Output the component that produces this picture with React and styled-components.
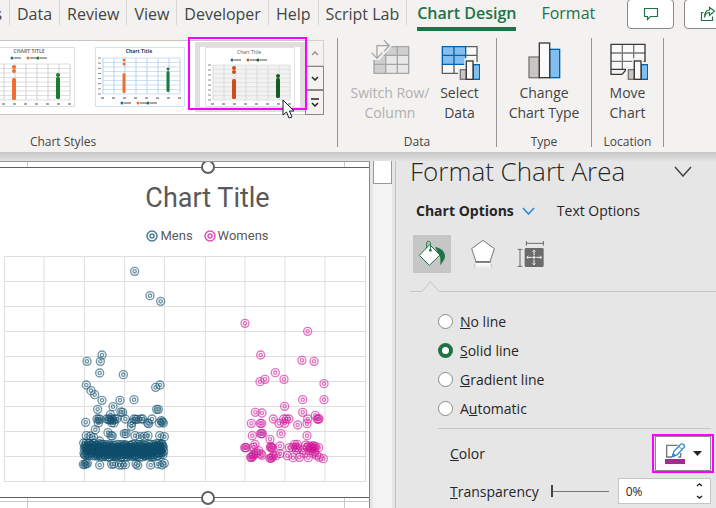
import React, { useState } from 'react'
import styled, { createGlobalStyle } from 'styled-components'

const GlobalStyle = createGlobalStyle`
  * {
    box-sizing: border-box;
  }

  body {
    margin: 0;
    background: #e6e6e6;
    color: #262626;
    font-family: "Open Sans", "Noto Sans", sans-serif;
    font-size: 14px;
    overflow: hidden;
  }

  button, input {
    font: inherit;
    color: inherit;
    margin: 0;
  }
`

const PlainButton = styled.button`
  border: 0;
  padding: 0;
  background: none;
  cursor: pointer;
`

const Window = styled.div`
  min-height: 100vh;
  display: flex;
  flex-direction: column;
  overflow: hidden;
`

/* Ribbon */

const Ribbon = styled.header`
  background: #f3f2f1;
  color: #444;
  padding-bottom: 5px;
`

const TabRow = styled.nav`
  display: flex;
  align-items: flex-start;
  height: 38px;
`

const Tab = styled(PlainButton)`
  flex: none;
  height: 25px;
  padding: 0 7px;
  border-right: 1px solid #dad8d6;
  font-size: 16px;
  line-height: 28px;
`

const CutTab = styled(Tab)`
  width: 10px;
  padding-left: 0;
  display: flex;
  justify-content: flex-end;
`

const ContextTab = styled(PlainButton)`
  flex: none;
  margin-left: ${props => (props.$active ? 10 : 25)}px;
  height: 31px;
  font-size: 16px;
  line-height: 27px;
  color: #217346;
  font-weight: ${props => (props.$active ? 600 : 400)};
  border-bottom: 4px solid ${props => (props.$active ? '#217346' : 'transparent')};
`

const TabActions = styled.div`
  display: flex;
  gap: 10px;
  margin-left: auto;
  margin-right: -15px;
`

const ActionButton = styled(PlainButton)`
  width: 47px;
  height: 30px;
  margin-top: -1px;
  border: 1px solid #8a8886;
  border-radius: 4px;
  background: #fff;
  display: flex;
  align-items: center;
  justify-content: center;
`

const RibbonBody = styled.div`
  display: flex;
`

const Group = styled.section`
  flex: none;
  width: ${props => props.$width}px;
  height: 109px;
  padding-top: 2px;
  border-right: 1px solid #979593;
  display: flex;
  flex-direction: column;
  justify-content: space-between;
`

const GroupLabel = styled.div`
  font-size: 12px;
  line-height: 10px;
  text-align: center;
  padding-right: ${props => props.$shift || 0}px;
`

const Commands = styled.div`
  display: flex;
  justify-content: center;
`

const Command = styled(PlainButton)`
  display: flex;
  flex-direction: column;
  align-items: center;
  padding: 0 3px;
  min-width: 54px;
  line-height: 20px;
  white-space: nowrap;

  svg {
    margin-bottom: 3px;
  }

  &:disabled {
    color: #b1afad;
  }
`

const Gallery = styled.div`
  position: relative;
  display: flex;
  width: 324px;
  height: 75px;
`

const GalleryStrip = styled.div`
  flex: 1;
  min-width: 0;
  display: flex;
  justify-content: flex-end;
  overflow: hidden;
  background: #fff;
  border-top: 1px solid #c8c6c4;
  border-bottom: 1px solid #c8c6c4;
`

const StyleItem = styled(PlainButton)`
  flex: none;
  width: 110px;
  height: 70px;
  margin-top: 1px;
  padding: 0 5px;
  border: 5px solid ${props => (props.$selected ? '#e1dfdd' : 'transparent')};

  svg {
    display: block;
  }
`

const GalleryButtons = styled.div`
  width: 19px;
  display: grid;
  grid-template-rows: 26px 24px 25px;
`

const GalleryButton = styled(PlainButton)`
  display: flex;
  align-items: center;
  justify-content: center;
  border: 1px solid #8a8886;

  &:disabled {
    border-color: #d2d0ce;
  }
`

const GalleryHighlight = styled.div`
  position: absolute;
  left: 188px;
  top: -3px;
  width: 119px;
  height: 73px;
  border: 2px solid #ff00ff;
`

const Pointer = styled.svg`
  position: absolute;
  left: 282px;
  top: 59px;
`

const Shade = styled.div`
  height: 9px;
  background: linear-gradient(#c6c6c6, #e2e2e2);
`

/* Sheet */

const Workspace = styled.main`
  flex: 1;
  display: flex;
`

const Sheet = styled.div`
  flex: 1;
  min-width: 0;
  overflow: hidden;
  background: #fff;
  border-top: 1px solid #999;
  border-right: 1px solid #888;
`

const CellRow = styled.div`
  display: flex;
  height: ${props => props.$height}px;
  border-top: ${props => (props.$line ? '1px solid #c8c8c8' : '0')};
`

const Cell = styled.div`
  flex: none;
  width: ${props => props.$width}px;
  border-right: 1px solid #c8c8c8;
`

// the chart is wider than the visible cells and runs under the scroll bar
const ChartFrame = styled.div`
  position: relative;
  margin-right: -46px;
  padding: 11px 0 7px;
  border-top: 1px solid #606060;
  border-bottom: 1px solid #606060;
  font-family: Roboto, sans-serif;
  color: #595959;
`

const Handle = styled.span`
  position: absolute;
  left: 50%;
  ${props => props.$edge}: -8px;
  width: 14px;
  height: 14px;
  margin-left: -7px;
  border: 2px solid #606060;
  border-radius: 50%;
  background: #fff;
`

const ChartTitle = styled.h1`
  margin: 0;
  font-size: 27px;
  font-weight: 400;
  line-height: 38px;
  text-align: center;
`

const Legend = styled.div`
  display: flex;
  justify-content: center;
  gap: 11px;
  margin: 9px 0 4px;
  font-size: 13px;
  line-height: 20px;
`

const LegendItem = styled.span`
  display: flex;
  align-items: center;
  gap: 2px;
`

const Plot = styled.svg`
  display: block;
  width: 100%;
`

const ScrollTrack = styled.div`
  flex: none;
  width: 19px;
  margin: 0 3px;
  background: #f3f3f3;
`

const ScrollThumb = styled.div`
  height: 23px;
  background: #fff;
  border: 1px solid #999;
  border-top: 0;
`

/* Format pane */

const Pane = styled.aside`
  flex: none;
  width: 321px;
  border-left: 1px solid #bfbfbf;
`

const PaneHead = styled.div`
  display: flex;
  align-items: center;
  justify-content: space-between;
  height: 20px;
  padding: 0 24px 0 14px;
`

const PaneTitle = styled.h2`
  margin: 0;
  font-size: 26px;
  font-weight: 300;
  line-height: 20px;
`

const OptionTabs = styled.div`
  display: flex;
  align-items: center;
  gap: 22px;
  margin-top: 20px;
  padding-left: 20px;
  line-height: 20px;
`

const OptionTab = styled(PlainButton)`
  display: flex;
  align-items: center;
  gap: 8px;
  font-weight: ${props => (props.$active ? 700 : 400)};
`

const IconTabs = styled.div`
  display: flex;
  gap: 13px;
  margin-top: 14px;
  padding-left: 17px;
`

const IconTab = styled(PlainButton)`
  width: 38px;
  height: 38px;
  background: ${props => (props.$active ? '#c6c6c6' : 'none')};

  svg {
    display: block;
  }
`

const Notch = styled.div`
  display: flex;
  align-items: flex-end;
  height: 12px;
  margin: 7px 0 0 14px;

  &::before, &::after {
    content: '';
    height: 1px;
    background: #c6c6c6;
  }

  &::before {
    width: 12px;
  }

  &::after {
    flex: 1;
  }
`

const LineOptions = styled.div`
  margin: 15px 5px 0 42px;
  padding-bottom: 5px;
  border-bottom: 1px solid #c6c6c6;
`

const RadioRow = styled.label`
  display: flex;
  align-items: center;
  gap: 7px;
  height: 29px;
`

const Radio = styled.input`
  appearance: none;
  width: 15px;
  height: 15px;
  border: 1px solid #8a8a8a;
  border-radius: 50%;
  background: #fff;

  &:checked {
    border: 4px solid #217346;
  }
`

const Field = styled.div`
  display: flex;
  align-items: center;
  justify-content: space-between;
  padding: 0 5px 0 54px;
  margin-top: 7px;
`

const ColorButton = styled(PlainButton)`
  position: relative;
  width: 56px;
  height: 35px;
  display: flex;
  align-items: center;
  justify-content: center;
  gap: 8px;
  border: 1px solid #8a8a8a;
  background: #fff;

  &::after {
    content: '';
    position: absolute;
    inset: -3px -4px;
    border: 2px solid #ff00ff;
  }
`

const Slider = styled.input`
  appearance: none;
  width: 58px;
  height: 14px;
  margin: 0 9px 0 12px;
  background: linear-gradient(#767676, #767676) center / 100% 1px no-repeat;

  &::-webkit-slider-thumb {
    appearance: none;
    width: 2px;
    height: 12px;
    background: #444;
  }
`

const SpinBox = styled.div`
  display: flex;
  flex: 1;
  min-width: 0;
  height: 26px;
  border: 1px solid #c6c6c6;
  background: #fff;
`

const SpinInput = styled.input`
  flex: 1;
  min-width: 0;
  border: 0;
  padding: 0 7px;
  background: none;
  font-size: 12px;
`

const SpinButtons = styled.div`
  display: grid;
  flex: none;
  width: 22px;
`

const SpinButton = styled(PlainButton)`
  display: flex;
  align-items: center;
  justify-content: center;
`

const Chevron = ({ width = 8, height = 5, color = '#262626', weight = 1.5, up, bar }) => (
  <svg width={width} height={height + (bar ? 4 : 0)} fill="none" stroke={color} strokeWidth={weight}>
    {bar && <path d={`M0 1H${width}`} />}
    <path
      d={up
        ? `M1 ${height - 1}L${width / 2} 1L${width - 1} ${height - 1}`
        : `M1 ${bar ? 5 : 1}L${width / 2} ${height + (bar ? 3 : -1)}L${width - 1} ${bar ? 5 : 1}`}
    />
  </svg>
)

const thumbColumns = [8, 19, 30, 41, 52, 63, 74, 85]

const StyleThumb = ({ title, titleY, titleColor, bold, legendY, plotY, plotH, grid, border, fill, orange, green, wide, tops }) => {
  const w = wide ? 4 : 3
  return (
    <svg width="90" height="60" viewBox="0 0 90 60">
      <rect x=".5" y=".5" width="89" height="59" fill="#fff" stroke={border} />
      <rect x="8" y={plotY} width="77" height={plotH} fill={fill} />
      <g stroke={grid} strokeWidth="1">
        {thumbColumns.map(x => <path key={x} d={`M${x} ${plotY}v${plotH}`} />)}
        {[0, 1, 2, 3, 4, 5, 6, 7, 8].map(i => (
          <path key={i} strokeWidth=".7" d={`M8 ${plotY + (plotH * i) / 8}h77`} />
        ))}
      </g>
      <g stroke="#888" strokeWidth="1.5">
        {thumbColumns.map(x => <path key={x} d={`M${x - 2} ${plotY + plotH + 4}h3`} />)}
        {[0, 1, 2, 3, 4, 5, 6, 7].map(i => (
          <path key={i} strokeWidth="1" d={`M3 ${plotY + (plotH * i) / 7}h3`} />
        ))}
      </g>
      <text x="44" y={titleY} textAnchor="middle" fontSize="5" fontWeight={bold ? 700 : 400} fill={titleColor}>{title}</text>
      {[[27, '#1f6b94'], [43, orange], [53, green]].map(([x, color]) => (
        <g key={x}>
          <circle cx={x} cy={legendY} r="1.5" fill={color} />
          <path d={`M${x + 2} ${legendY}h7`} stroke="#888" strokeWidth="1.5" />
        </g>
      ))}
      <g fill={orange}>
        <circle cx="29" cy={tops[0]} r={w / 2} />
        <circle cx="29" cy={tops[0] + 4} r={w / 2} />
        <rect x={29 - w / 2} y={tops[1]} width={w} height={tops[3] - tops[1]} rx="1.5" />
      </g>
      <g fill={green}>
        <circle cx="73" cy={tops[2]} r={w / 2} />
        <rect x={73 - w / 2} y={tops[2] + 2} width={w} height={tops[3] - tops[2] - 3} rx="1.5" />
      </g>
    </svg>
  )
}

const chartStyles = [
  { title: 'CHART TITLE', titleY: 6, titleColor: '#777', bold: true, legendY: 11, plotY: 17, plotH: 36, grid: '#d0d0d0', border: '#dcdcdc', fill: '#fff', orange: '#ed7031', green: '#1b7a2f', wide: true, tops: [20, 31, 28, 53] },
  { title: 'Chart Title', titleY: 6, titleColor: '#1d3c63', bold: true, legendY: 56, plotY: 11, plotH: 36, grid: '#b5d3ef', border: '#cfe4f7', fill: '#fff', orange: '#ed7031', green: '#1b7a3c', tops: [13, 26, 22, 46] },
  { title: 'Chart Title', titleY: 7, titleColor: '#555', legendY: 13, plotY: 18, plotH: 35, grid: '#dadada', border: '#e3e3e3', fill: '#f2f2f2', orange: '#c9501a', green: '#155c24', wide: true, tops: [21, 32, 29, 52], selected: true },
]

const SmallBars = () => (
  <g strokeWidth="4">
    <path d="M54 122V80H73V55H106V66H126V122Z" fill="#f3f2f1" />
    <rect x="61" y="89" width="18" height="29" fill="#c8c6c4" stroke="#797775" />
    <rect x="100" y="74" width="19" height="44" fill="#83beec" stroke="#0063b1" />
    <rect x="79" y="63" width="20" height="55" fill="#fafafa" stroke="#3b3a39" />
  </g>
)

const SwitchIcon = () => (
  <svg width="40" height="40" viewBox="0 0 120 120" fill="none" strokeWidth="4">
    <path d="M12 20H116V100H12Z" fill="#e8e8e9" />
    <path d="M12 20H116V46H47V100H12Z" fill="#cfcfcf" />
    <path d="M12 20H116V100H12ZM47 20V100M82 20V100M12 46H116M12 73H116" stroke="#a5a5a5" />
    <path d="M0 0H66V18L28 60H0Z" fill="#f3f2f1" />
    <path d="M21 54V17H57M5 38L21 55L37 38M42 1L58 17L42 34" stroke="#a5a5a5" />
  </svg>
)

const SelectIcon = () => (
  <svg width="40" height="40" viewBox="0 0 120 120" fill="none" strokeWidth="4">
    <path d="M7 20H111V100H7Z" fill="#fafafa" />
    <path d="M77 20H111V100H7V73M42 73V100M77 46H111M77 73H111" stroke="#605e5c" />
    <path d="M7 20H77V73H7Z" fill="#83beec" />
    <path d="M7 20H77V73H7ZM42 20V73M7 46H77" stroke="#0063b1" />
    <SmallBars />
  </svg>
)

const ChartTypeIcon = () => (
  <svg width="40" height="40" viewBox="0 0 120 120" strokeWidth="4">
    <rect x="15" y="51" width="31" height="62" fill="#c8c6c4" stroke="#797775" />
    <rect x="77" y="28" width="30" height="85" fill="#83beec" stroke="#0063b1" />
    <rect x="46" y="9" width="31" height="104" fill="#fafafa" stroke="#3b3a39" />
  </svg>
)

const MoveIcon = () => (
  <svg width="40" height="40" viewBox="0 0 120 120" fill="none" strokeWidth="4">
    <path d="M9 13H111V88H9Z" fill="#fafafa" />
    <path d="M9 39H111M9 64H111M43 13V88M77 13V88" stroke="#797775" />
    <path d="M9 88V13H111V88M9 88H55L42 103H9V88" stroke="#3b3a39" />
    <SmallBars />
  </svg>
)

const CommentIcon = () => (
  <svg width="16" height="14" fill="none" stroke="#217346" strokeWidth="1.2">
    <path d="M1.5 1.5H14.5V9.5H7.5L4.5 12.5V9.5H1.5Z" />
  </svg>
)

const ShareIcon = () => (
  <svg width="16" height="16" fill="none" stroke="#217346" strokeWidth="1.2">
    <path d="M3.5 6.5H1.5V14.5H12.5V10.5" />
    <path d="M4.5 11.5C5 8 7 6.5 9.5 6.5V9.5L14.5 5L9.5 1.5V4C6 4 4.5 7 4.5 11.5Z" />
  </svg>
)

const FillIcon = () => (
  <svg width="38" height="38" viewBox="0 0 114 114" fill="none" strokeWidth="3">
    <path d="M66 36C86 40 96 50 96 64C96 74 88 82 82 91C82 78 84 68 78 60Z" fill="#217346" />
    <path d="M50 29L81 60L49 91L19 61Z" fill="#fff" stroke="#217346" />
    <path d="M41 40V24C41 17 52 17 52 24V44" stroke="#217346" />
    <circle cx="52" cy="46" r="4" fill="#217346" />
  </svg>
)

const PentagonIcon = () => (
  <svg width="38" height="38" viewBox="0 0 114 114">
    <defs>
      <linearGradient id="reflection" x1="0" y1="0" x2="0" y2="1">
        <stop offset="0" stopColor="#fff" />
        <stop offset="1" stopColor="#fff" stopOpacity=".2" />
      </linearGradient>
    </defs>
    <path d="M34 84H80L84 98H30Z" fill="url(#reflection)" />
    <path d="M34 86L30 98M80 86L84 98" stroke="#aaa" strokeWidth="2" />
    <path d="M57 16L91 41L78 80H36L23 41Z" fill="#fff" stroke="#767676" strokeWidth="3" />
    <path d="M34 81H80" stroke="#767676" strokeWidth="5" />
  </svg>
)

const SizeIcon = () => (
  <svg width="38" height="38" viewBox="0 0 114 114" fill="none" strokeWidth="3">
    <path d="M34 25H85M34 18V32M85 18V32M15 43V94M8 43H22M8 94H22" stroke="#6b6b6b" />
    <rect x="29" y="39" width="57" height="57" rx="4" fill="#6b6b6b" />
    <path d="M57 46V60M57 74V89M36 67H50M64 67H79M52 67H62M57 62V72" stroke="#fff" />
    <path d="M52 50L57 45L62 50M52 85L57 90L62 85M40 62L35 67L40 72M75 62L80 67L75 72" stroke="#fff" strokeWidth="2" />
  </svg>
)

const PenIcon = () => (
  <svg width="20" height="21" viewBox="0 0 60 63" fill="none">
    <path d="M22 42H5V7H38M47 30V42H40" stroke="#767676" strokeWidth="4" />
    <path d="M22 41L27 25L47 4C52 0 61 7 57 13L37 35Z" fill="#fff" stroke="#2b88d8" strokeWidth="4" />
    <path d="M22 41L25 31L31 38ZM41 10L51 19" fill="#2b88d8" stroke="#2b88d8" strokeWidth="3" />
    <rect y="48" width="60" height="15" fill="#9e2c91" />
  </svg>
)

/* Chart data, in plot units (three to a pixel) */

const mens = [
  [404, 64], [450, 137], [482, 154],
  [261, 334], [306, 315], [301, 334], [299, 369], [370, 374], [259, 405], [273, 422], [284, 434],
  [306, 451], [360, 451], [402, 449], [467, 412], [480, 405], [293, 478], [339, 470], [363, 486],
  [368, 487], [470, 478], [475, 478], [331, 494], [257, 517], [291, 507], [296, 507], [300, 508],
  [295, 519], [320, 507], [325, 508], [329, 510], [334, 506], [338, 509], [345, 507], [350, 507],
  [335, 518], [342, 519], [376, 507], [402, 507], [407, 508], [412, 508], [423, 507], [428, 507],
  [443, 519], [446, 521], [456, 507], [478, 519], [484, 512], [487, 516], [490, 519], [395, 519],
  [394, 529], [286, 539], [324, 548], [333, 557], [337, 558], [373, 551], [378, 551], [405, 557],
  [420, 560], [433, 559], [444, 557], [479, 557], [493, 560], [259, 557], [272, 558], [281, 563],
  [299, 573], [250, 643], [254, 644], [258, 641], [262, 640], [299, 645], [335, 643], [341, 642],
  [358, 645], [366, 645], [376, 644], [408, 642], [413, 646], [452, 645], [474, 642], [486, 645], [493, 640],
]

// the crowded band near the axis
const rows = [583, 590, 595, 600, 605, 612, 618]
for (let i = 0; i < 240; i++) {
  const x = 251 + ((i * 97) % 241)
  mens.push([x, rows[(i * 5 + (i % 3)) % 7] + (i % 4) - (x < 285 || x > 465 ? 4 : 0)])
}

const womens = [
  [735, 220], [923, 244],
  [782, 315], [906, 331], [942, 334], [826, 368], [852, 388], [795, 388], [780, 395], [972, 401],
  [908, 449], [972, 449], [854, 469], [766, 487], [786, 489], [908, 487], [946, 496], [820, 507],
  [851, 507], [859, 507], [867, 507], [923, 507], [952, 507], [955, 508], [957, 506], [754, 520],
  [781, 520], [785, 520], [837, 520], [854, 520], [893, 525], [921, 521], [757, 557], [782, 551],
  [785, 551], [787, 551], [843, 551], [921, 557], [810, 568], [765, 583], [840, 588], [734, 593],
  [737, 593], [739, 593], [760, 592], [812, 593], [815, 592], [817, 594], [812, 589], [868, 593],
  [884, 583], [892, 583], [878, 593], [887, 593], [893, 594], [917, 585], [922, 592], [927, 588],
  [932, 593], [936, 590], [940, 587], [944, 594], [938, 596], [946, 589], [956, 593], [776, 602],
  [768, 610], [761, 612], [786, 616], [752, 622], [754, 622], [757, 621], [760, 616], [783, 612],
  [810, 625], [813, 625], [815, 622], [820, 618], [828, 617], [840, 611], [862, 617], [879, 623],
  [898, 622], [912, 610], [925, 623], [940, 610], [944, 605], [950, 616], [958, 622], [970, 626],
  [890, 600], [909, 600], [930, 602],
]

const columns = [13, 132, 253, 374, 493, 616, 735, 855, 975, 1097]

const Markers = ({ points, color }) => (
  <g fill="none" stroke={color} strokeWidth="4" strokeOpacity=".6">
    {points.map(([x, y], i) => (
      <React.Fragment key={i}>
        <circle cx={x} cy={y} r="12" />
        <circle cx={x} cy={y} r="5" />
      </React.Fragment>
    ))}
  </g>
)

const LegendMarker = ({ color }) => (
  <svg width="12" height="12" fill="none" stroke={color} strokeWidth="1.5">
    <circle cx="6" cy="6" r="5" />
    <circle cx="6" cy="6" r="2" />
  </svg>
)

const lineTypes = [
  { id: 'none', label: <><u>N</u>o line</> },
  { id: 'solid', label: <><u>S</u>olid line</> },
  { id: 'gradient', label: <><u>G</u>radient line</> },
  { id: 'auto', label: <>A<u>u</u>tomatic</> },
]

const RibbonBar = () => (
  <Ribbon>
    <TabRow>
      <CutTab>s</CutTab>
      {['Data', 'Review', 'View', 'Developer', 'Help', 'Script Lab'].map(name => <Tab key={name}>{name}</Tab>)}
      <ContextTab $active>Chart Design</ContextTab>
      <ContextTab>Format</ContextTab>
      <TabActions>
        <ActionButton aria-label="Comments"><CommentIcon /></ActionButton>
        <ActionButton aria-label="Share"><ShareIcon /></ActionButton>
      </TabActions>
    </TabRow>
    <RibbonBody>
      <Group $width={338}>
        <Gallery>
          <GalleryStrip>
            {chartStyles.map((style, i) => (
              <StyleItem key={i} $selected={style.selected}><StyleThumb {...style} /></StyleItem>
            ))}
          </GalleryStrip>
          <GalleryButtons>
            <GalleryButton disabled aria-label="Previous"><Chevron up color="#979593" /></GalleryButton>
            <GalleryButton aria-label="Next"><Chevron /></GalleryButton>
            <GalleryButton aria-label="More"><Chevron bar /></GalleryButton>
          </GalleryButtons>
          <GalleryHighlight />
          <Pointer width="14" height="21" viewBox="0 0 14 21">
            <path d="M1 1V16L4.5 13L7 19L10 18L7.5 12H12Z" fill="#fff" stroke="#1b1b2b" />
          </Pointer>
        </Gallery>
        <GroupLabel $shift={211}>Chart Styles</GroupLabel>
      </Group>
      <Group $width={159}>
        <Commands>
          <Command disabled><SwitchIcon /><span>Switch Row/</span><span>Column</span></Command>
          <Command><SelectIcon /><span>Select</span><span>Data</span></Command>
        </Commands>
        <GroupLabel>Data</GroupLabel>
      </Group>
      <Group $width={95}>
        <Commands>
          <Command><ChartTypeIcon /><span>Change</span><span>Chart Type</span></Command>
        </Commands>
        <GroupLabel>Type</GroupLabel>
      </Group>
      <Group $width={72}>
        <Commands>
          <Command><MoveIcon /><span>Move</span><span>Chart</span></Command>
        </Commands>
        <GroupLabel>Location</GroupLabel>
      </Group>
    </RibbonBody>
  </Ribbon>
)

const ChartSheet = () => (
  <Sheet>
    <CellRow $height={5}><Cell $width={28} /><Cell $width={317} /></CellRow>
    <ChartFrame>
      <ChartTitle>Chart Title</ChartTitle>
      <Legend>
        <LegendItem><LegendMarker color="#4a7d96" />Mens</LegendItem>
        <LegendItem><LegendMarker color="#e04fb9" />Womens</LegendItem>
      </Legend>
      <Plot viewBox="0 0 1245 720">
        <g stroke="#dedede" strokeWidth="3">
          {columns.map(x => <path key={x} d={`M${x} 20V694`} />)}
          {[0, 1, 2, 3, 4, 5, 6, 7, 8, 9].map(i => <path key={i} d={`M12 ${19.5 + i * 75}H1098`} />)}
        </g>
        <Markers points={mens} color="#0f4f6b" />
        <Markers points={womens} color="#cf1598" />
      </Plot>
      <Handle $edge="top" />
      <Handle $edge="bottom" />
    </ChartFrame>
    <CellRow $height={3}><Cell $width={28} /><Cell $width={317} /></CellRow>
    <CellRow $height={7} $line><Cell $width={28} /><Cell $width={317} /></CellRow>
  </Sheet>
)

const FormatPane = () => {
  const [line, setLine] = useState('solid')
  const [transparency, setTransparency] = useState(0)
  const step = by => setTransparency(Math.min(100, Math.max(0, transparency + by)))

  return (
    <Pane>
      <PaneHead>
        <PaneTitle>Format Chart Area</PaneTitle>
        <PlainButton aria-label="Pane options"><Chevron width={18} height={11} color="#444" /></PlainButton>
      </PaneHead>
      <OptionTabs>
        <OptionTab $active>Chart Options <Chevron width={13} height={8} color="#2b88d8" /></OptionTab>
        <OptionTab>Text Options</OptionTab>
      </OptionTabs>
      <IconTabs>
        <IconTab $active aria-label="Fill and line"><FillIcon /></IconTab>
        <IconTab aria-label="Effects"><PentagonIcon /></IconTab>
        <IconTab aria-label="Size and properties"><SizeIcon /></IconTab>
      </IconTabs>
      <Notch>
        <svg width="17" height="12" fill="none" stroke="#c6c6c6"><path d="M0 11.5L8.5 1.5L17 11.5" /></svg>
      </Notch>
      <LineOptions>
        {lineTypes.map(({ id, label }) => (
          <RadioRow key={id}>
            <Radio type="radio" name="line" checked={line === id} onChange={() => setLine(id)} />
            <span>{label}</span>
          </RadioRow>
        ))}
      </LineOptions>
      <Field>
        <label htmlFor="color"><u>C</u>olor</label>
        <ColorButton id="color">
          <PenIcon />
          <svg width="9" height="5"><path d="M0 0H9L4.5 5Z" fill="#262626" /></svg>
        </ColorButton>
      </Field>
      <Field>
        <label htmlFor="transparency"><u>T</u>ransparency</label>
        <Slider
          id="transparency"
          type="range"
          min="0"
          max="100"
          value={transparency}
          onChange={e => setTransparency(Number(e.target.value))}
        />
        <SpinBox>
          <SpinInput aria-label="Transparency" readOnly value={`${transparency}%`} />
          <SpinButtons>
            <SpinButton aria-label="Increase" onClick={() => step(1)}><Chevron up width={7} height={4} /></SpinButton>
            <SpinButton aria-label="Decrease" onClick={() => step(-1)}><Chevron width={7} height={4} /></SpinButton>
          </SpinButtons>
        </SpinBox>
      </Field>
    </Pane>
  )
}

const App = () => (
  <Window>
    <GlobalStyle />
    <RibbonBar />
    <Shade />
    <Workspace>
      <ChartSheet />
      <ScrollTrack><ScrollThumb /></ScrollTrack>
      <FormatPane />
    </Workspace>
  </Window>
)

export default App
